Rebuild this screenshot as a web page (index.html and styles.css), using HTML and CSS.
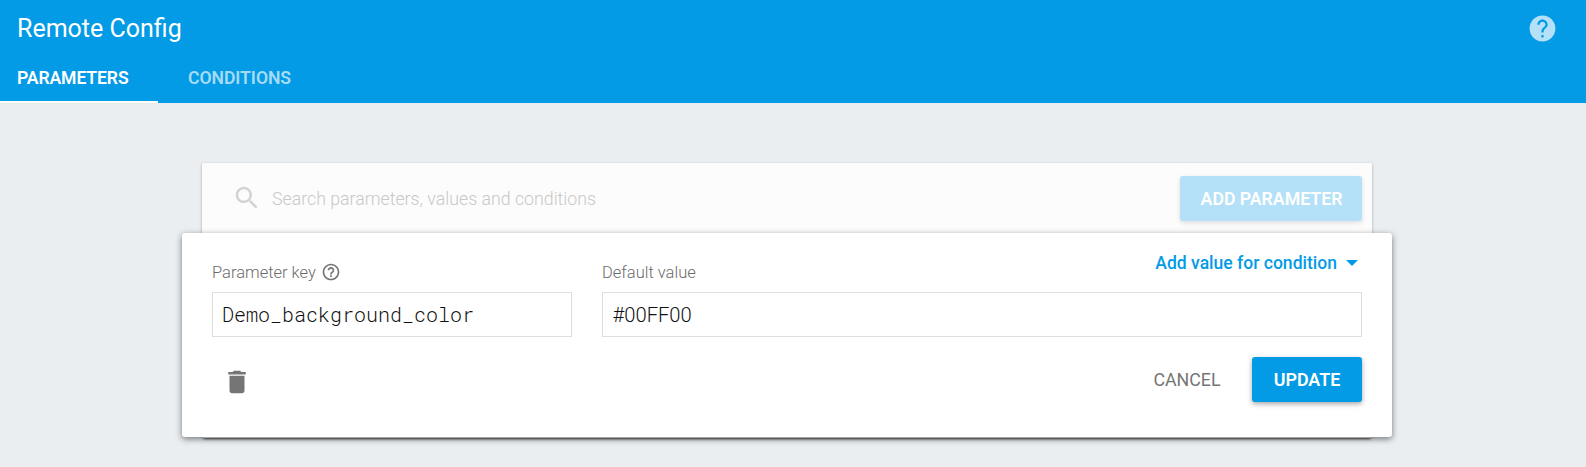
FILE: index.html
```html
<!DOCTYPE html>
<html lang="en">
<head>
<meta charset="utf-8">
<title>Remote Config</title>
<link rel="stylesheet" href="styles.css">
</head>
<body>
<header class="header">
  <div class="header-top">
    <h1 class="title">Remote Config</h1>
    <svg class="help" viewBox="0 0 24 24"><path d="M12 2C6.480 2 2 6.480 2 12s4.480 10 10 10 10-4.480 10-10S17.520 2 12 2zm.850 17h-1.700v-2h1.700v2zm2.070-7.750l-.9.920C13.300 12.900 12.850 13.500 12.850 15h-1.700v-.5c0-1.100.450-2.100 1.170-2.830l1.240-1.260c.370-.360.690-.860.690-1.410 0-1.200-1-2.200-2.250-2.200s-2.250 1-2.250 2.200H8c0-2.210 1.790-4 4-4s4 1.790 4 4c0 .880-.360 1.680-1.080 2.250z"/></svg>
  </div>
  <nav class="tabs">
    <a class="tab active">PARAMETERS</a>
    <a class="tab">CONDITIONS</a>
  </nav>
</header>
<main class="card">
  <div class="toolbar">
    <svg class="search-icon" viewBox="0 0 24 24"><path d="M15.500 14h-.790l-.280-.270C15.410 12.590 16 11.110 16 9.500 16 5.910 13.090 3 9.500 3S3 5.910 3 9.500 5.910 16 9.500 16c1.610 0 3.090-.590 4.230-1.570l.270.280v.790l5 4.990L20.490 19l-4.990-5zm-6 0C7.010 14 5 11.990 5 9.500S7.010 5 9.500 5 14 7.010 14 9.500 11.990 14 9.500 14z"/></svg>
    <span class="search-text">Search parameters, values and conditions</span>
    <button class="button add">ADD PARAMETER</button>
  </div>
  <section class="editor">
    <div class="fields">
      <div class="field key">
        <div class="label">Parameter key
          <svg class="hint" viewBox="0 0 24 24"><path d="M11 18h2v-2h-2v2zm1-16C6.480 2 2 6.480 2 12s4.480 10 10 10 10-4.480 10-10S17.520 2 12 2zm0 18c-4.410 0-8-3.590-8-8s3.590-8 8-8 8 3.590 8 8-3.590 8-8 8zm0-14c-2.210 0-4 1.790-4 4h2c0-1.100.9-2 2-2s2 .9 2 2c0 2-3 1.750-3 5h2c0-2.250 3-2.500 3-5 0-2.210-1.790-4-4-4z"/></svg>
        </div>
        <div class="input mono">Demo_background_color</div>
      </div>
      <div class="field value">
        <div class="label">Default value
          <span class="condition">Add value for condition<i class="caret"></i></span>
        </div>
        <div class="input plain">#00FF00</div>
      </div>
    </div>
    <div class="actions">
      <svg class="trash" viewBox="0 0 24 24"><path d="M6 19c0 1.100.9 2 2 2h8c1.100 0 2-.9 2-2V7H6v12zM19 4h-3.500l-1-1h-5l-1 1H5v2h14V4z"/></svg>
      <button class="cancel">CANCEL</button>
      <button class="button update">UPDATE</button>
    </div>
  </section>
</main>
</body>
</html>
```

FILE: styles.css
```css
* { box-sizing: border-box; }
body {
  margin: 0;
  height: 467px;
  overflow: hidden;
  background: #eaeef1;
  font-family: Roboto, "Liberation Sans", sans-serif;
  font-size: 17.500px;
}
svg { display: block; fill: currentColor; flex: none; }
button { border: 0; padding: 0; background: none; font: inherit; }

.header { height: 103px; background: #039be5; color: #fff; }
.header-top {
  display: flex;
  justify-content: space-between;
  align-items: center;
  height: 56px;
  padding: 0 28.500px 0 17px;
}
.title { margin: 0; padding-top: 2px; font-size: 25px; font-weight: 400; line-height: 56px; }
.help { width: 31px; height: 31px; color: #b4e1f7; }
.tabs { display: flex; height: 47px; }
.tab {
  height: 47px;
  padding-left: 30px;
  font-size: 17.600px;
  font-weight: 600;
  letter-spacing: -.05px;
  line-height: 45px;
  color: #a6dbf6;
}
.tab.active {
  width: 158px;
  padding-left: 17px;
  color: #fff;
  letter-spacing: -.12px;
  border-bottom: 2px solid #fff;
}

.card {
  width: 1170px;
  height: 275px;
  margin: 60px 0 0 202px;
  background: #fcfcfc;
  border-radius: 2px;
  box-shadow: 0 1px 3px rgba(0, 0, 0, .3), 0 3px 2px -2px rgba(0, 0, 0, .5);
}
.toolbar {
  display: flex;
  align-items: center;
  height: 70px;
  padding: 0 10px 0 30px;
}
.search-icon { width: 30px; height: 30px; color: #d3d3d3; }
.search-text { margin-left: 10px; padding-top: 2px; color: #c8c8c8; font-size: 17.760px; font-weight: 300; }
.button {
  height: 45px;
  border-radius: 3px;
  color: #fff;
  font-weight: 500;
}
.add {
  width: 182px;
  margin-left: auto;
  padding: 2px 0 0 1px;
  background: #b4e1f8;
  font-size: 17.750px;
  font-weight: 600;
  letter-spacing: -.04px;
  box-shadow: 0 2px 5px rgba(0, 0, 0, .12);
}

.editor {
  height: 204px;
  margin: 0 -20px;
  padding: 29px 30px 0;
  background: #fff;
  border-radius: 3px;
  box-shadow: 0 2px 6px rgba(0, 0, 0, .5);
}
.fields { display: flex; gap: 30px; }
.key { width: 360px; }
.value { flex: 1; }
.label {
  display: flex;
  align-items: center;
  height: 20px;
  margin-bottom: 10px;
  color: #6c6c6c;
  font-size: 16.500px;
  font-weight: 300;
}
.hint { width: 20px; height: 20px; margin-left: 5px; color: #757575; }
.condition {
  display: flex;
  align-items: center;
  margin: -19px 4px 0 auto;
  color: #039be5;
  font-size: 17.550px;
  font-weight: 500;
}
.caret {
  margin-left: 9px;
  border: 6.250px solid transparent;
  border-top-color: currentColor;
  border-bottom: 0;
}
.input {
  height: 45px;
  padding-left: 9px;
  border: 1px solid #dedede;
  color: #111;
  font-size: 20px;
  font-weight: 300;
  line-height: 43px;
}
.plain { padding-left: 9.500px; font-size: 20.200px; line-height: 45px; }
.mono { font-family: "Roboto Mono", "Liberation Mono", monospace; }
.actions { display: flex; align-items: center; height: 45px; margin-top: 20px; }
.trash { width: 30px; height: 30px; margin: 5px 0 0 10px; color: #757575; }
.cancel { margin: 0 31.500px 0 auto; color: #757575; font-size: 17.800px; }
.update {
  width: 110px;
  background: #039be5;
  font-size: 17.900px;
  font-weight: 600;
  box-shadow: 0 2px 5px rgba(0, 0, 0, .35);
}
```
